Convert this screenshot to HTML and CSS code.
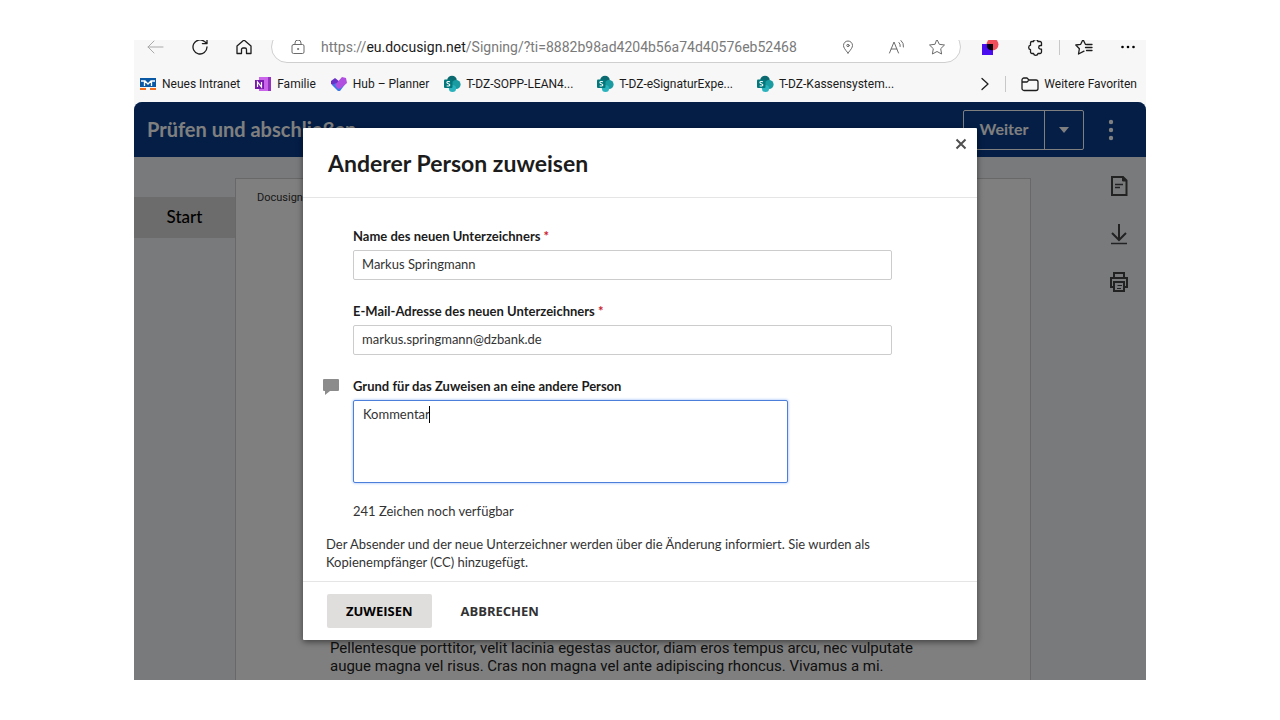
FILE: index.html
```html
<!DOCTYPE html>
<html lang="de">
<head>
<meta charset="utf-8">
<title>Anderer Person zuweisen</title>
<link rel="stylesheet" href="styles.css">
</head>
<body>
<svg class="defs" aria-hidden="true">
  <symbol id="sharepoint" viewBox="0 0 18 18">
    <circle cx="9" cy="5.500" r="4.800" fill="#0b6a70"/>
    <circle cx="13" cy="9.500" r="4.600" fill="#1a9ba1"/>
    <circle cx="9.500" cy="13.500" r="3.600" fill="#2bb3bd"/>
    <rect x="1" y="4.500" width="8.500" height="8.500" rx="1" fill="#03787c"/>
    <path d="M6.900 6.800C5.500 6.200 3.800 6.500 3.900 7.700 4 8.900 6.800 8.500 6.800 9.900 6.800 11.100 5 11.300 3.700 10.700" fill="none" stroke="#fff" stroke-width="1.100"/>
  </symbol>
</svg>
<div class="browser">
  <div class="toolbar">
    <div class="toolbar-row">
      <button class="icon-btn nav-back" aria-label="Zurück"><svg width="18" height="18" viewBox="0 0 18 18" class="line"><path d="M17 9H2M8 3L2 9l6 6"/></svg></button>
      <button class="icon-btn nav-reload" aria-label="Neu laden"><svg width="18" height="18" viewBox="0 0 18 18" class="line thick"><path d="M16 9a7 7 0 1 1-2.500-5.400L16 5.500M16 1v4.600h-4.600"/></svg></button>
      <button class="icon-btn nav-home" aria-label="Startseite"><svg width="18" height="18" viewBox="0 0 18 18" class="line thick"><path d="M2 8l7-6 7 6v7.500h-4.500v-4a1.500 1.500 0 0 0-1.500-1.500H8a1.500 1.500 0 0 0-1.500 1.500v4H2z"/></svg></button>
      <div class="address">
        <svg width="16" height="16" viewBox="0 0 16 16" class="line grey"><rect x="2" y="5.500" width="12" height="9" rx="1.500"/><path d="M5 5.500V4a3 3 0 0 1 6 0v1.500"/><circle cx="8" cy="10" r=".6"/></svg>
        <span class="url">https://<b>eu.docusign.net</b>/Signing/?ti=8882b98ad4204b56a74d40576eb52468</span>
        <svg class="pin line grey" width="12" height="14" viewBox="0 0 12 14"><path d="M6 13C3 9.500 1.500 7.500 1.500 5.500a4.500 4.500 0 0 1 9 0C10.500 7.500 9 9.500 6 13z"/><circle cx="6" cy="5.500" r="1.200"/></svg>
        <svg class="read line grey" width="18" height="16" viewBox="0 0 18 16"><path d="M1.500 14L6 3l4.500 11M3.200 10h5.600M11 3.500q1.500 1.500 1.200 4M13 1.500q3 2.500 2.500 6.500"/></svg>
        <svg class="star line grey" width="18" height="18" viewBox="0 0 18 18"><path d="M9 1.500l2.300 4.800 5.200.7-3.800 3.700.9 5.300L9 13.500 4.400 16l.9-5.300L1.500 7l5.200-.7z"/></svg>
      </div>
      <svg class="ext" width="18" height="18" viewBox="0 0 18 18"><circle cx="11.500" cy="6.500" r="6" fill="#f0505c"/><path d="M1 6h11v11H1z" fill="#4a0df0"/><path d="M6 6h6v6q-7 1-6-6z" fill="#08000c"/></svg>
      <svg class="puzzle line thick" width="18" height="18" viewBox="0 0 18 18"><path d="M6 3.500h1.500a2.300 2.300 0 0 1 4.500 0h2a1.500 1.500 0 0 1 1.500 1.500v2.500h-1a1.800 1.800 0 0 0 0 3.600h1V14a1.500 1.500 0 0 1-1.500 1.500h-2a2.300 2.300 0 0 1-4.500 0H6A1.500 1.500 0 0 1 4.500 14v-2.300a2.300 2.300 0 0 1 0-4.500V5A1.500 1.500 0 0 1 6 3.500z"/></svg>
      <span class="rule"></span>
      <svg class="favs line thick" width="18" height="18" viewBox="0 0 18 18"><path d="M10.500 6.500L8 1.500 5.700 6.300.8 7l3.600 3.700-.9 5.300L9 13.200M11.500 6.500H17M10.500 9.500H17M11.500 12.500H17"/></svg>
      <svg class="more" width="16" height="4" viewBox="0 0 16 4"><circle cx="2.500" cy="2" r="1.300"/><circle cx="8" cy="2" r="1.300"/><circle cx="13.500" cy="2" r="1.300"/></svg>
    </div>
  </div>
  <nav class="bookmarks" aria-label="Favoriten">
    <a class="bm" href="#"><svg width="18" height="16" viewBox="0 0 18 16"><path fill="#0a57a4" d="M1 2h16v9H1z"/><path d="M2 5h4l3 3 3-3h4M5.500 5v5M12.500 5v5" fill="none" stroke="#fff" stroke-width="1.300"/><path fill="#f06e1d" d="M1 12h6v2H1zm10 0h6v2h-6z"/></svg>Neues Intranet</a>
    <a class="bm" href="#"><svg width="18" height="16" viewBox="0 0 18 16"><path fill="#ca64ea" d="M5 1h12v14H5z"/><path fill="#9332bf" d="M14 1h3v14h-3z"/><path fill="#7719aa" d="M1 4h9v9H1z"/><path d="M3.500 11V6l4 5V6" fill="none" stroke="#fff" stroke-width="1.200"/></svg>Familie</a>
    <a class="bm" href="#"><svg width="18" height="16" viewBox="0 0 18 16"><path fill="#6a2fc8" d="M1 5l4-3 5 4-4 5-5-3z"/><path fill="#3d78e8" d="M2 9l4-2 4 2 6-2-6 8H8z"/><path fill="#b04fe0" d="M5 9l7-8 4 1 1 5-6 5-3 1z"/></svg>Hub – Planner</a>
    <div class="bm-sites">
      <a class="bm" href="#"><svg width="18" height="18"><use href="#sharepoint"/></svg>T-DZ-SOPP-LEAN4...</a>
      <a class="bm" href="#"><svg width="18" height="18"><use href="#sharepoint"/></svg>T-DZ-eSignaturExpe...</a>
      <a class="bm" href="#"><svg width="18" height="18"><use href="#sharepoint"/></svg>T-DZ-Kassensystem...</a>
    </div>
    <div class="bm-end">
      <svg class="chevron line thick" width="10" height="14" viewBox="0 0 10 14"><path d="M2 1.500L8 7l-6 5.500"/></svg>
      <span class="rule"></span>
      <a class="bm" href="#"><svg width="18" height="16" viewBox="0 0 18 16" class="line thick"><path d="M1 4a2 2 0 0 1 2-2h3l2 2h7a2 2 0 0 1 2 2v6.500a2 2 0 0 1-2 2H3a2 2 0 0 1-2-2zM1 6h5l2-2"/></svg>Weitere Favoriten</a>
    </div>
  </nav>
  <div class="app">
    <header class="app-header">
      <span class="app-title">Prüfen und abschließen</span>
      <div class="split">
        <button class="next">Weiter</button>
        <button class="next-menu" aria-label="Weitere Optionen"><svg width="10" height="6" viewBox="0 0 10 6"><path d="M0 0h10L5 6z" fill="currentColor"/></svg></button>
      </div>
      <button class="kebab" aria-label="Menü"><svg width="6" height="22" viewBox="0 0 6 22" fill="currentColor"><circle cx="3" cy="3" r="2.200"/><circle cx="3" cy="11" r="2.200"/><circle cx="3" cy="19" r="2.200"/></svg></button>
    </header>
    <div class="workspace">
      <aside><button class="start">Start</button></aside>
      <main class="paper">
        <p class="envelope">Docusign</p>
        <p class="copy">Pellentesque porttitor, velit lacinia egestas auctor, diam eros tempus arcu, nec vulputate augue magna vel risus. Cras non magna vel ante adipiscing rhoncus. Vivamus a mi.</p>
      </main>
      <div class="rail">
        <button class="icon-btn" aria-label="Dokument"><svg width="20" height="22" viewBox="0 0 20 22" class="bold-line"><path d="M3 2h11l3.500 3.500V20H3z"/><path d="M13.500 2v4h4z" fill="currentColor" stroke-width="1"/><path d="M6 9.500h8M6 12.500h5" stroke-width="1.300"/></svg></button>
        <button class="icon-btn" aria-label="Herunterladen"><svg width="20" height="22" viewBox="0 0 20 22" class="bold-line"><path d="M10 1v16M3 10l7 7 7-7"/><path d="M2 20.500h16" stroke-width="1.300"/></svg></button>
        <button class="icon-btn" aria-label="Drucken"><svg width="20" height="22" viewBox="0 0 20 22" class="bold-line"><path d="M5 7V2h10v5M5 16H2V7h16v9h-3M5 11h10v9H5z"/><path d="M8 17.500h4M8.500 14.500H13" stroke-width="1.200"/></svg></button>
      </div>
    </div>
    <div class="overlay">
      <form class="dialog" role="dialog" aria-labelledby="dialog-title">
        <div class="dialog-head">
          <h1 id="dialog-title">Anderer Person zuweisen</h1>
          <button type="button" class="close" aria-label="Schließen"><svg width="12" height="12" viewBox="0 0 12 12"><path d="M1.500 1.500l9 9M10.500 1.500l-9 9" stroke="#505050" stroke-width="2"/></svg></button>
        </div>
        <div class="dialog-body">
          <div class="field">
            <label for="name">Name des neuen Unterzeichners <i>*</i></label>
            <input id="name" type="text" value="Markus Springmann">
          </div>
          <div class="field">
            <label for="mail">E-Mail-Adresse des neuen Unterzeichners <i>*</i></label>
            <input id="mail" type="text" value="markus.springmann@dzbank.de">
          </div>
          <div class="field">
            <svg class="bubble" width="18" height="18" viewBox="0 0 18 18"><path d="M1 2h14a1 1 0 0 1 1 1v10a1 1 0 0 1-1 1H7l-5 4v-4H1a1 1 0 0 1-1-1V3a1 1 0 0 1 1-1z" fill="#8c8c8c"/></svg>
            <label for="reason">Grund für das Zuweisen an eine andere Person</label>
            <div class="area"><textarea id="reason">Kommentar</textarea><span class="caret"></span></div>
            <p class="count">241 Zeichen noch verfügbar</p>
          </div>
        </div>
        <p class="info">Der Absender und der neue Unterzeichner werden über die Änderung informiert. Sie wurden als Kopienempfänger (CC) hinzugefügt.</p>
        <div class="dialog-foot">
          <button type="button" class="primary">ZUWEISEN</button>
          <button type="button" class="plain">ABBRECHEN</button>
        </div>
      </form>
    </div>
  </div>
</div>
</body>
</html>
```
FILE: styles.css
```css
* { box-sizing: border-box; }
body { margin: 0; background: #fff; font-family: Lato, "Liberation Sans", sans-serif; font-size: 13px; color: #333; }
p, h1 { margin: 0; }
button { font: inherit; color: inherit; background: none; border: 0; padding: 0; cursor: pointer; }
svg { display: block; flex: none; }
.defs { position: absolute; width: 0; height: 0; }
.line { fill: none; stroke: #1d1d1d; stroke-width: 1; stroke-linecap: round; stroke-linejoin: round; }
.thick { stroke-width: 1.300; }
.grey { stroke: #6b6b6b; }

.browser { margin: 40px 134px; height: calc(100vh - 80px); display: flex; flex-direction: column; overflow: hidden; background: #f7f7f7; font-family: Roboto, sans-serif; }
.toolbar { height: 24px; flex: none; overflow: hidden; }
.toolbar-row { height: 32px; margin-top: -9px; display: flex; align-items: center; padding: 0 10px 0 12px; }
.icon-btn { display: flex; }
.nav-back { opacity: .35; margin-right: 27px; }
.nav-reload { margin-right: 26px; }
.nav-home { margin-right: 18px; }
.address { flex: 1; height: 32px; display: flex; align-items: center; background: #fff; border: 1px solid #cfcfcf; border-radius: 16px; padding: 0 14px 0 18px; }
.url { flex: 1; margin-left: 15px; font-size: 14px; line-height: 14px; color: #7a7a7a; white-space: nowrap; }
.url b { font-weight: 400; color: #1b1b1b; }
.pin { margin-right: 34px; }
.read { margin-right: 22px; }
.ext { margin: 0 27px 0 20px; }
.rule { width: 1px; height: 16px; background: #c8c8c8; }
.puzzle { margin-right: 15px; }
.favs { margin: 0 27px 0 15px; }

.bookmarks { flex: none; height: 38px; display: flex; align-items: center; gap: 14px; padding: 1px 9px 0 5px; font-size: 12px; }
.bm { display: flex; align-items: center; gap: 5px; color: #1b1b1b; text-decoration: none; white-space: nowrap; }
.bm-sites { display: flex; gap: 23px; }
.bm-end { margin-left: auto; display: flex; align-items: center; gap: 15px; }

.app { position: relative; flex: 1; display: flex; flex-direction: column; min-height: 0; border-radius: 8px 8px 0 0; overflow: hidden; background: #f3f5f8; font-family: Lato, sans-serif; }
.app-header { flex: none; height: 55px; display: flex; align-items: center; background: #083c8c; color: #fff; padding: 0 32px 0 13px; }
.app-title { flex: 1; font-size: 20px; font-weight: 700; line-height: 24px; padding-bottom: 2px; }
.split { display: flex; height: 40px; border: 1px solid #fff; border-radius: 2px; }
.next { width: 80px; padding-bottom: 2px; font-size: 16px; font-weight: 700; }
.next-menu { width: 39px; border-left: 1px solid #fff; display: grid; place-items: center; }
.kebab { margin-left: 24px; }
.workspace { flex: 1; min-height: 0; display: grid; grid-template-columns: 101px 1fr 115px; }
.start { display: block; width: 100%; height: 41px; margin-top: 40px; padding-bottom: 2px; background: #d8d8d8; color: #000; font-size: 17px; font-weight: 500; }
.paper { margin-top: 21px; background: #fff; border: 1px solid #d0d0d0; border-bottom: 0; padding: 10px 95px 0 21px; font-family: Roboto, sans-serif; }
.envelope { font-size: 11px; line-height: 18px; color: #333; }
.copy { margin: 432px 0 0 73px; font-size: 15px; line-height: 18px; color: #222; }
.rail { display: flex; flex-direction: column; align-items: center; gap: 26px; padding: 18px 0 0 61px; color: #444; }
.bold-line { fill: none; stroke: currentColor; stroke-width: 2; }

.overlay { position: absolute; inset: 0; background: rgba(0, 0, 0, .5); display: flex; justify-content: center; align-items: flex-start; padding-top: 26px; }
.dialog { width: 674px; background: #fff; border-radius: 1px; box-shadow: 0 2px 6px rgba(0, 0, 0, .5); }
.dialog-head { height: 70px; display: flex; justify-content: space-between; align-items: center; padding: 0 10px 0 25px; border-bottom: 1px solid #e5e5e5; }
h1 { font-size: 23px; font-weight: 700; color: #1c1c1c; }
.close { align-self: flex-start; margin-top: 10px; }
.dialog-body { padding: 29px 85px 0 20px; display: grid; gap: 22px; }
.field { display: grid; grid-template-columns: 30px 1fr; }
.field > * { grid-column: 2; }
.field > .bubble { grid-column: 1; grid-row: 1; }
label { grid-row: 1; line-height: 18px; margin-bottom: 5px; font-weight: 700; color: #1c1c1c; }
label i { font-style: normal; color: #c8202f; }
input, textarea { display: block; width: 100%; font: inherit; color: #333; background: #fff; border: 1px solid #ccc; border-radius: 2px; outline: 0; }
input { height: 30px; padding: 0 8px 2px; }
.area { position: relative; margin-right: 104px; }
textarea { height: 83px; padding: 4px 9px; line-height: 18px; resize: none; border-color: #4c7fd9; box-shadow: 0 0 3px #8db4f5; }
.caret { position: absolute; left: 76px; top: 6px; width: 1px; height: 17px; background: #000; }
.count { margin-top: 19px; line-height: 18px; }
.info { line-height: 18px; padding: 15px 85px 10px 23px; }
.dialog-foot { display: flex; gap: 10px; padding: 12px 24px; border-top: 1px solid #e5e5e5; }
.primary, .plain { height: 34px; padding: 0 19px; font-family: "Open Sans", sans-serif; font-size: 13px; font-weight: 700; border-radius: 2px; }
.primary { background: #e0dedc; color: #000; }
```
